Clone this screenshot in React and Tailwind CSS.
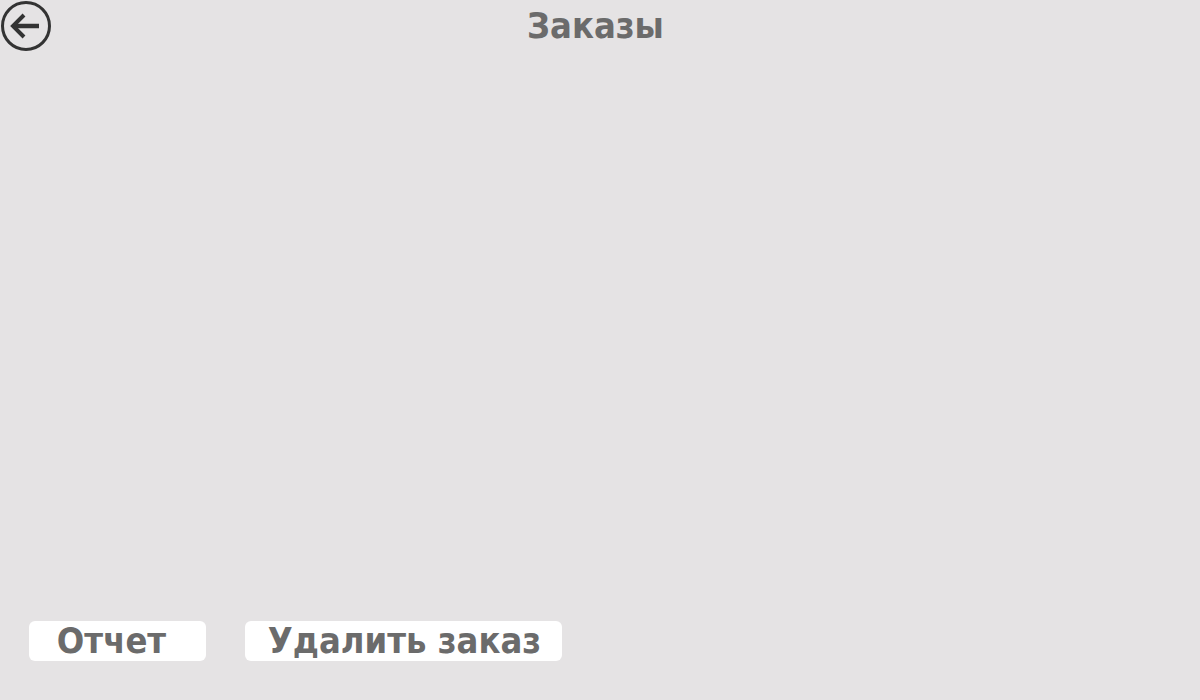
const BackIcon = () => (
  <svg width="52" height="52" viewBox="0 0 52 52" fill="none">
    <circle cx="26" cy="26" r="23.5" stroke="#333333" strokeWidth="3" />
    <path d="M13 26h26" stroke="#333333" strokeWidth="4.5" />
    <path d="M24 15L13 26l11 11" stroke="#333333" strokeWidth="4" strokeLinejoin="miter" />
  </svg>
);

export default function App() {
  return (
    <div
      className="h-screen w-full bg-[#e5e3e4] flex flex-col text-[#6b6b6b]"
      style={{ fontFamily: '"DejaVu Sans Condensed", "DejaVu Sans", Verdana, sans-serif' }}
    >
      <header className="relative h-[52px] flex items-center justify-center">
        <button className="absolute left-0 top-0">
          <BackIcon />
        </button>
        <h1 className="text-[36px] font-bold leading-none pr-[9px]">Заказы</h1>
      </header>

      <div className="flex-1" />

      <div className="flex gap-[39px] pl-[29px] pb-[39px]">
        <button className="w-[177px] h-[40px] bg-white rounded-[6px] text-[36px] font-bold leading-none flex items-center justify-center pr-[12px]">
          Отчет
        </button>
        <button className="w-[317px] h-[40px] bg-white rounded-[6px] text-[36px] font-bold leading-none flex items-center justify-center pl-[2px]">
          Удалить заказ
        </button>
      </div>
    </div>
  );
}
